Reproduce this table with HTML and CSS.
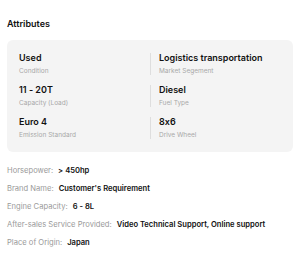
FILE: index.html
```html
<!DOCTYPE html>
<html>
<head>
<meta charset="utf-8">
<link rel="stylesheet" href="styles.css">
</head>
<body>
<div class="page">
  <h2 class="title">Attributes</h2>
  <div class="card">
    <div class="item"><div class="val">Used</div><div class="lbl">Condition</div></div>
    <div class="item right"><div class="val">Logistics transportation</div><div class="lbl">Market Segement</div></div>
    <div class="item"><div class="val">11 - 20T</div><div class="lbl">Capacity (Load)</div></div>
    <div class="item right"><div class="val">Diesel</div><div class="lbl">Fuel Type</div></div>
    <div class="item"><div class="val">Euro 4</div><div class="lbl">Emission Standard</div></div>
    <div class="item right"><div class="val">8x6</div><div class="lbl">Drive Wheel</div></div>
  </div>
  <div class="rows">
    <div class="row"><span class="k">Horsepower:</span><span class="v">&gt; 450hp</span></div>
    <div class="row"><span class="k">Brand Name:</span><span class="v">Customer's Requirement</span></div>
    <div class="row"><span class="k">Engine Capacity:</span><span class="v">6 - 8L</span></div>
    <div class="row"><span class="k">After-sales Service Provided:</span><span class="v">Video Technical Support, Online support</span></div>
    <div class="row"><span class="k">Place of Origin:</span><span class="v">Japan</span></div>
  </div>
</div>
</body>
</html>
```
FILE: styles.css
```css
* { box-sizing: border-box; }
html, body { margin: 0; padding: 0; background: #fff; }
body { font-family: Inter, "Noto Sans", sans-serif; color: #111; font-feature-settings: "calt" 0; }
.page { padding: 18px 7px 0 7px; }
.title { margin: 0; font-size: 9px; line-height: 12px; font-weight: 600; color: #111; }
.card {
  margin-top: 10px;
  background: #f4f4f4;
  border-radius: 6px;
  padding: 13px 12px;
  display: grid;
  grid-template-columns: 1fr 1fr;
  row-gap: 10px;
}
.item { display: flex; flex-direction: column; gap: 4px; }
.item.right { border-left: 1px solid #dedede; padding-left: 8px; }
.val { font-size: 9px; line-height: 10px; font-weight: 600; color: #111; white-space: nowrap; }
.lbl { font-size: 6.5px; line-height: 8px; color: #a8a8a8; }
.rows { margin-top: 10px; display: flex; flex-direction: column; }
.row { display: flex; gap: 5px; font-size: 7.6px; line-height: 18px; white-space: nowrap; }
.k { color: #9a9a9a; }
.v { color: #111; font-weight: 600; }
```
